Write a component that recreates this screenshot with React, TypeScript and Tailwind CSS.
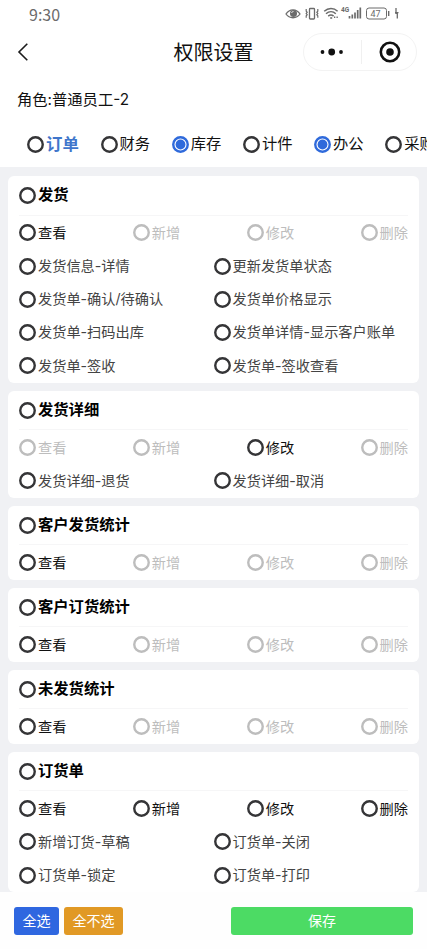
import React from "react";

type Perm = { label: string; off?: boolean };
type Group = { title: string; base: Perm[]; extra?: string[] };

const base = (enabled: string): Perm[] =>
  ["查看", "新增", "修改", "删除"].map((label) => ({ label, off: !enabled.includes(label) }));

const tabs = [
  { label: "订单", active: true },
  { label: "财务" },
  { label: "库存", checked: true },
  { label: "计件" },
  { label: "办公", checked: true },
  { label: "采购" },
];

const groups: Group[] = [
  {
    title: "发货",
    base: base("查看"),
    extra: [
      "发货信息-详情",
      "更新发货单状态",
      "发货单-确认/待确认",
      "发货单价格显示",
      "发货单-扫码出库",
      "发货单详情-显示客户账单",
      "发货单-签收",
      "发货单-签收查看",
    ],
  },
  { title: "发货详细", base: base("修改"), extra: ["发货详细-退货", "发货详细-取消"] },
  { title: "客户发货统计", base: base("查看") },
  { title: "客户订货统计", base: base("查看") },
  { title: "未发货统计", base: base("查看") },
  {
    title: "订货单",
    base: base("查看,新增,修改,删除"),
    extra: ["新增订货-草稿", "订货单-关闭", "订货单-锁定", "订货单-打印"],
  },
];

function Radio({ checked, off }: { checked?: boolean; off?: boolean }) {
  const color = checked ? "text-[#2f6adb]" : off ? "text-[#bdbdbd]" : "text-[#353537]";
  return (
    <svg className={`h-[17px] w-[17px] shrink-0 ${color}`} viewBox="0 0 17 17" fill="none">
      <circle cx="8.5" cy="8.5" r="7.25" stroke="currentColor" strokeWidth="2.4" />
      {checked && <circle cx="8.5" cy="8.5" r="4.9" fill="currentColor" />}
    </svg>
  );
}

function StatusBar() {
  return (
    <div className="flex h-[28px] shrink-0 items-center justify-between pl-[29px] pr-[27px] text-[#6b6b6b]">
      <span className="font-['Noto_Sans_CJK_SC',sans-serif] text-[16px] leading-none">9:30</span>
      <svg className="h-[20px] w-[115px]" viewBox="285 4 115 20" fill="none" stroke="currentColor">
        {/* eye */}
        <path d="M286 14c3.5-5.6 10.5-5.6 14 0c-3.5 5-10.5 5-14 0z" strokeWidth="1.3" />
        <circle cx="293.5" cy="13.5" r="3.5" fill="currentColor" stroke="none" />
        <path d="M291.5 13a2 2 0 0 1 2-1.5" stroke="#fff" strokeWidth=".8" />
        {/* vibrate */}
        <rect x="309.5" y="8.5" width="5" height="10.5" rx=".8" strokeWidth="1.3" />
        <path d="M306.2 9v2.200l1 1l-1 1.300l1 1.300l-1 1v2M317.800 9v2.200l-1 1l1 1.300l-1 1.300l1 1v2" strokeWidth="1.2" />
        {/* wifi */}
        <path d="M324.2 11.2c4-3.600 9.600-3.600 13.400 0M326 13.700c3-2.600 7-2.600 9.800 0M328.200 16.100c1.700-1.400 3.800-1.400 5.400 0" strokeWidth="1.5" />
        <path d="M330.2 18h2M334 17.300h1.300M336.500 17.300h1.300" strokeWidth="1.6" />
        <text x="341" y="12" fontSize="6.5" fontWeight="700" fill="currentColor" stroke="none" fontFamily="Roboto, sans-serif">
          4G
        </text>
        <path d="M349.500 18.500v-2.500M352.300 18.500v-4M355 18.500v-6M357.700 18.500v-8.500M360.300 18.500v-11" strokeWidth="1.7" />
        {/* battery */}
        <rect x="366.500" y="8" width="20" height="11" rx="2.5" strokeWidth="1" />
        <path d="M388.700 11v5" strokeWidth="1.4" />
        <text x="370.500" y="16.700" fontSize="9" fill="currentColor" stroke="none" fontFamily="Roboto, sans-serif">
          47
        </text>
        {/* charging bolt */}
        <path d="M396 8v6M395 12.600h3.500M397.300 12.500v6" strokeWidth="1.3" />
      </svg>
    </div>
  );
}

function NavBar() {
  return (
    <div className="grid h-[50px] shrink-0 grid-cols-[1fr_auto_1fr] items-center pr-[10px]">
      <svg className="mb-[2px] ml-[17px] h-[18px] w-[12px]" viewBox="0 0 12 18" fill="none" stroke="#1c1c1c" strokeWidth="1.6">
        <path d="M10.3 .8L2 9L10.3 17.2" />
      </svg>
      <h1 className="pl-[10px] text-[20px] leading-none text-[#111]">权限设置</h1>
      <div className="mb-[2px] flex h-[38px] w-[114px] items-center justify-self-end rounded-full border border-[#f3f3f3]">
        <svg className="h-[10px] w-[57px]" viewBox="0 0 57 10" fill="#111">
          <circle cx="18.5" cy="5" r="1.9" />
          <circle cx="27.700" cy="5" r="3.4" />
          <circle cx="37" cy="5" r="1.9" />
        </svg>
        <span className="h-[24px] w-px bg-[#f0f0f0]" />
        <svg className="ml-[17px] h-[22px] w-[22px]" viewBox="0 0 22 22" fill="none">
          <circle cx="11" cy="11" r="9.2" stroke="#111" strokeWidth="2.6" />
          <circle cx="11" cy="11" r="3.8" fill="#111" />
        </svg>
      </div>
    </div>
  );
}

function GroupCard({ group }: { group: Group }) {
  return (
    <section className="shrink-0 rounded-[6px] bg-white pb-[0.4px] pl-[11px] pr-[11px]">
      <div className="flex h-[39.6px] items-center gap-[2px] border-b border-[#f6f6f7]">
        <Radio />
        <h2 className="pb-px text-[15.3px] font-bold leading-none text-black">{group.title}</h2>
      </div>
      <div className="mt-[0.8px] flex h-[33.2px] items-center justify-between">
        {group.base.map((p) => (
          <label key={p.label} className="flex items-center gap-[2px]">
            <Radio off={p.off} />
            <span className={`text-[14.2px] leading-none ${p.off ? "text-[#bdbdbd]" : "text-[#111]"}`}>{p.label}</span>
          </label>
        ))}
      </div>
      {group.extra && (
        <div className="grid grid-cols-2">
          {group.extra.map((label) => (
            <label key={label} className="flex h-[33.2px] items-center gap-[2px]">
              <Radio />
              <span className="whitespace-nowrap text-[14.2px] leading-none text-[#444]">{label}</span>
            </label>
          ))}
        </div>
      )}
    </section>
  );
}

export default function App() {
  return (
    <div className="flex h-[949px] w-[427px] flex-col overflow-hidden bg-white font-['Inter','Noto_Sans_CJK_SC',sans-serif]">
      <StatusBar />
      <NavBar />
      <div className="flex h-[43px] shrink-0 items-center pl-[17px] text-[15.3px] leading-none text-[#111]">
        角色:普通员工-2
      </div>
      <div className="flex h-[46px] shrink-0 items-center overflow-hidden pl-[27px]">
        {tabs.map((t) => (
          <label
            key={t.label}
            className={`flex shrink-0 items-center gap-[2px] ${t.active ? "w-[73.5px]" : "w-[71.2px]"}`}
          >
            <Radio checked={t.checked} />
            <span
              className={`whitespace-nowrap leading-none ${
                t.active ? "text-[16.4px] font-bold text-[#3f76cb]" : "text-[15.3px] text-[#111]"
              }`}
            >
              {t.label}
            </span>
          </label>
        ))}
      </div>
      <main className="flex min-h-0 flex-1 flex-col gap-[8px] overflow-hidden bg-[#f0f1f4] px-[8px] pt-[9px]">
        {groups.map((g) => (
          <GroupCard key={g.title} group={g} />
        ))}
      </main>
      <footer className="flex h-[57px] shrink-0 items-start bg-[#fefefe] pl-[14px] pr-[14px] pt-[15px] text-[14px] leading-none text-white">
        <button className="h-[28px] w-[45px] rounded-[3px] bg-[#2f67e0]">全选</button>
        <button className="ml-[5px] h-[28px] w-[59px] rounded-[3px] bg-[#e19925]">全不选</button>
        <button className="ml-auto h-[28px] w-[182px] rounded-[3px] bg-[#4cdb64]">保存</button>
      </footer>
    </div>
  );
}
